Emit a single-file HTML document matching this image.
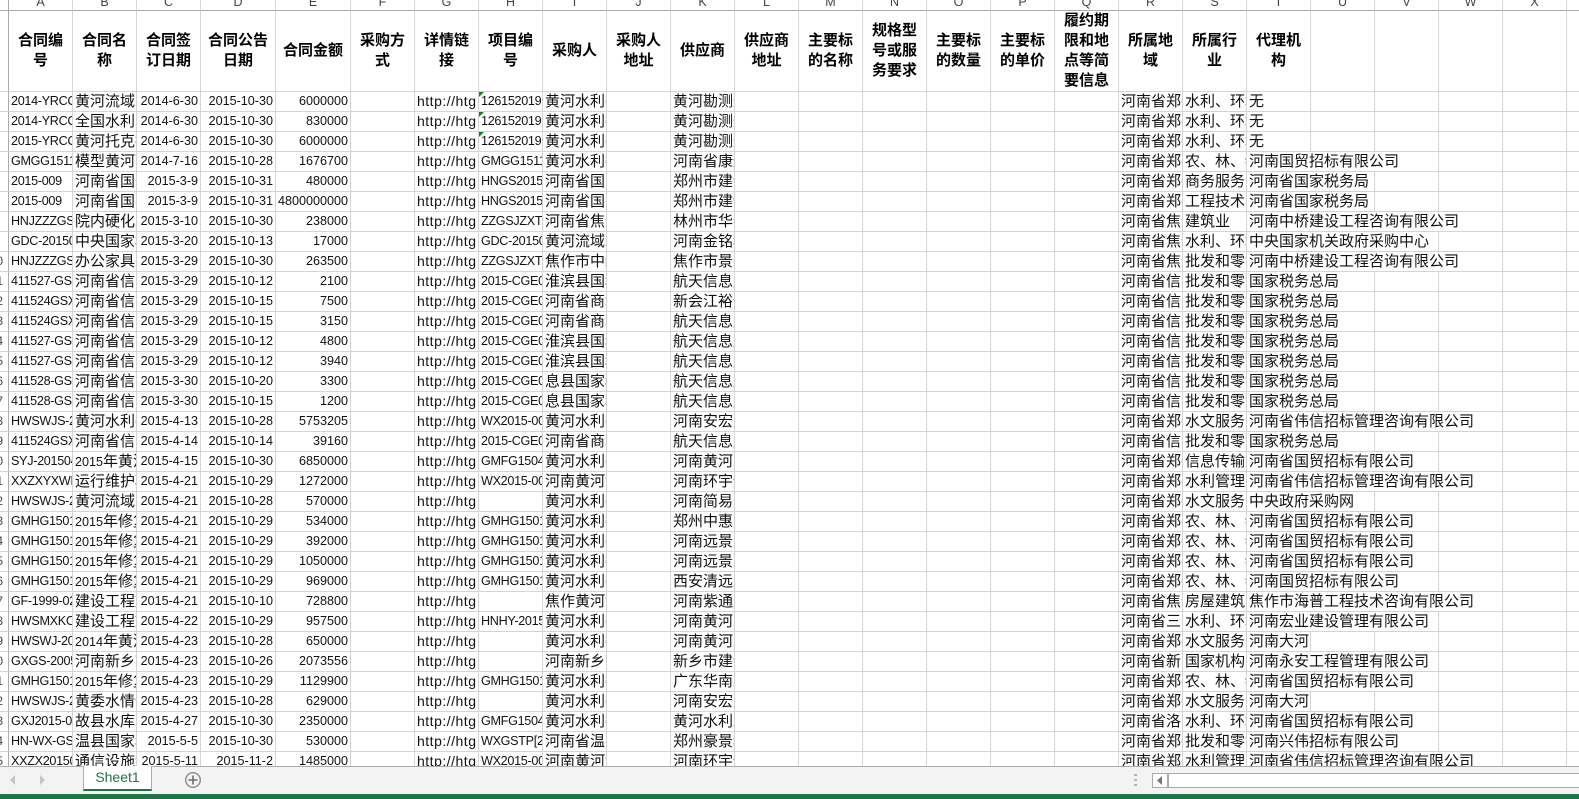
<!DOCTYPE html>
<html lang="zh"><head><meta charset="utf-8"><title>Sheet1</title>
<style>
html,body{margin:0;padding:0;background:#fff;width:1579px;height:799px;overflow:hidden}
#g{position:absolute;left:0;top:0;width:1579px;height:766px;overflow:hidden}
table{table-layout:fixed;border-collapse:separate;border-spacing:0;width:1631px;font:15px/19px "Liberation Sans","Noto Sans CJK SC",sans-serif;color:#111}
td{box-sizing:border-box;height:20px;padding:0 2px;overflow:hidden;white-space:nowrap;border-right:1px solid #d4d4d4;border-bottom:1px solid #d4d4d4}
.l,i{font-size:12.6px;font-style:normal}
i{line-height:10px}
.l:nth-child(2),.l:nth-child(9){letter-spacing:-.3px}
.l:nth-child(8){font-size:14px;letter-spacing:.5px}
.r{text-align:right;font-size:12.6px}
.n{padding:0;border-right:1px solid #ababab;font-size:12px;color:#444;text-align:right;padding-right:5px;direction:ltr}
.n div{width:3px;overflow:hidden;direction:rtl}
.c td{height:11px;padding:0;border-bottom:1px solid #ababab;text-align:center;font-size:12.5px;color:#444}
.c div{height:10px;line-height:5px;overflow:hidden}
.c td:first-child{border-right-color:#ababab}
.h td{height:80px;white-space:normal;word-break:break-all;text-align:center;font-weight:bold;line-height:20px;color:#000;padding:0 3px}
.t{position:relative}
.t:before{content:"";position:absolute;left:0;top:0;border-top:5px solid #1a7f1a;border-right:5px solid transparent}
#b{position:absolute;left:0;top:766px;width:1579px;height:28px;background:#f3f3f3;border-top:1px solid #ababab;box-sizing:border-box}
#tab{position:absolute;left:83px;top:-1px;width:69px;height:25px;box-sizing:border-box;background:#fff;border:1px solid #ababab;border-top:0;border-bottom:2px solid #217346;color:#217346;font:14px/23px "Liberation Sans",sans-serif;text-align:center}
#st{position:absolute;left:0;top:794px;width:1579px;height:5px;background:#217346}
#sb{position:absolute;left:1152px;top:6px;width:427px;height:15px;box-sizing:border-box;background:#fff;border:1px solid #ababab;border-right:0}
#sb:before{content:"";position:absolute;left:14px;top:0;width:2px;height:13px;background:#ababab}
svg{position:absolute}
</style></head><body>
<div id="g"><table>
<colgroup><col style="width:9px"><col style="width:64px"><col style="width:64px"><col style="width:64px"><col style="width:75px"><col style="width:75px"><col style="width:64px"><col style="width:64px"><col style="width:64px"><col style="width:64px"><col style="width:64px"><col style="width:64px"><col style="width:64px"><col style="width:64px"><col style="width:64px"><col style="width:64px"><col style="width:64px"><col style="width:64px"><col style="width:64px"><col style="width:64px"><col style="width:64px"><col style="width:64px"><col style="width:64px"><col style="width:64px"><col style="width:64px"><col style="width:64px"></colgroup>
<tr class="c"><td><td><div>A</div><td><div>B</div><td><div>C</div><td><div>D</div><td><div>E</div><td><div>F</div><td><div>G</div><td><div>H</div><td><div>I</div><td><div>J</div><td><div>K</div><td><div>L</div><td><div>M</div><td><div>N</div><td><div>O</div><td><div>P</div><td><div>Q</div><td><div>R</div><td><div>S</div><td><div>T</div><td><div>U</div><td><div>V</div><td><div>W</div><td><div>X</div><td><div>Y</div></tr>
<tr class="h"><td style="border-right-color:#ababab"><td>合同编号<td>合同名称<td>合同签订日期<td>合同公告日期<td>合同金额<td>采购方式<td>详情链接<td>项目编号<td>采购人<td>采购人地址<td>供应商<td>供应商地址<td>主要标的名称<td>规格型号或服务要求<td>主要标的数量<td>主要标的单价<td>履约期限和地点等简要信息<td>所属地域<td>所属行业<td>代理机构<td><td><td><td><td></tr>
<tr><td class="n"><td class="l">2014-YRCC-01<td>黄河流域水<td class="r">2014-6-30<td class="r">2015-10-30<td class="r">6000000<td><td class="l">http://htg<td class="l t">1261520191<td>黄河水利委<td><td>黄河勘测规<td><td><td><td><td><td><td>河南省郑州<td>水利、环境<td>无<td><td><td><td><td></tr>
<tr><td class="n"><td class="l">2014-YRCC-02<td>全国水利.<td class="r">2014-6-30<td class="r">2015-10-30<td class="r">830000<td><td class="l">http://htg<td class="l t">1261520191<td>黄河水利委<td><td>黄河勘测规<td><td><td><td><td><td><td>河南省郑州<td>水利、环境<td>无<td><td><td><td><td></tr>
<tr><td class="n"><td class="l">2015-YRCC-03<td>黄河托克托<td class="r">2014-6-30<td class="r">2015-10-30<td class="r">6000000<td><td class="l">http://htg<td class="l t">1261520191<td>黄河水利委<td><td>黄河勘测规<td><td><td><td><td><td><td>河南省郑州<td>水利、环境<td>无<td><td><td><td><td></tr>
<tr><td class="n"><td class="l">GMGG1511<td>模型黄河下<td class="r">2014-7-16<td class="r">2015-10-28<td class="r">1676700<td><td class="l">http://htg<td class="l">GMGG1511<td>黄河水利委<td><td>河南省康达<td><td><td><td><td><td><td>河南省郑州<td>农、林、牧<td colspan="3">河南国贸招标有限公司<td><td><td></tr>
<tr><td class="n"><td class="l">2015-009<td>河南省国家<td class="r">2015-3-9<td class="r">2015-10-31<td class="r">480000<td><td class="l">http://htg<td class="l">HNGS20150<td>河南省国家<td><td>郑州市建设<td><td><td><td><td><td><td>河南省郑州<td>商务服务业<td colspan="2">河南省国家税务局<td><td><td><td></tr>
<tr><td class="n"><td class="l">2015-009<td>河南省国家<td class="r">2015-3-9<td class="r">2015-10-31<td class="r">4800000000<td><td class="l">http://htg<td class="l">HNGS20150<td>河南省国家<td><td>郑州市建设<td><td><td><td><td><td><td>河南省郑州<td>工程技术与<td colspan="2">河南省国家税务局<td><td><td><td></tr>
<tr><td class="n"><td class="l">HNJZZZGS01<td>院内硬化工<td class="r">2015-3-10<td class="r">2015-10-30<td class="r">238000<td><td class="l">http://htg<td class="l">ZZGSJZXTP1<td>河南省焦作<td><td>林州市华泰<td><td><td><td><td><td><td>河南省焦作<td>建筑业<td colspan="4">河南中桥建设工程咨询有限公司<td><td></tr>
<tr><td class="n"><td class="l">GDC-2015001<td>中央国家机<td class="r">2015-3-20<td class="r">2015-10-13<td class="r">17000<td><td class="l">http://htg<td class="l">GDC-2015001<td>黄河流域水<td><td>河南金铭科<td><td><td><td><td><td><td>河南省焦作<td>水利、环境<td colspan="3">中央国家机关政府采购中心<td><td><td></tr>
<tr><td class="n"><div>10</div><td class="l">HNJZZZGS02<td>办公家具采<td class="r">2015-3-29<td class="r">2015-10-30<td class="r">263500<td><td class="l">http://htg<td class="l">ZZGSJZXTP2<td>焦作市中级<td><td>焦作市景泰<td><td><td><td><td><td><td>河南省焦作<td>批发和零售<td colspan="4">河南中桥建设工程咨询有限公司<td><td></tr>
<tr><td class="n"><div>11</div><td class="l">411527-GSX1<td>河南省信阳<td class="r">2015-3-29<td class="r">2015-10-12<td class="r">2100<td><td class="l">http://htg<td class="l">2015-CGE001<td>淮滨县国税<td><td>航天信息股<td><td><td><td><td><td><td>河南省信阳<td>批发和零售<td colspan="2">国家税务总局<td><td><td><td></tr>
<tr><td class="n"><div>12</div><td class="l">411524GSX1<td>河南省信阳<td class="r">2015-3-29<td class="r">2015-10-15<td class="r">7500<td><td class="l">http://htg<td class="l">2015-CGE002<td>河南省商城<td><td>新会江裕信<td><td><td><td><td><td><td>河南省信阳<td>批发和零售<td colspan="2">国家税务总局<td><td><td><td></tr>
<tr><td class="n"><div>13</div><td class="l">411524GSX2<td>河南省信阳<td class="r">2015-3-29<td class="r">2015-10-15<td class="r">3150<td><td class="l">http://htg<td class="l">2015-CGE003<td>河南省商城<td><td>航天信息股<td><td><td><td><td><td><td>河南省信阳<td>批发和零售<td colspan="2">国家税务总局<td><td><td><td></tr>
<tr><td class="n"><div>14</div><td class="l">411527-GSX2<td>河南省信阳<td class="r">2015-3-29<td class="r">2015-10-12<td class="r">4800<td><td class="l">http://htg<td class="l">2015-CGE004<td>淮滨县国税<td><td>航天信息股<td><td><td><td><td><td><td>河南省信阳<td>批发和零售<td colspan="2">国家税务总局<td><td><td><td></tr>
<tr><td class="n"><div>15</div><td class="l">411527-GSX3<td>河南省信阳<td class="r">2015-3-29<td class="r">2015-10-12<td class="r">3940<td><td class="l">http://htg<td class="l">2015-CGE005<td>淮滨县国税<td><td>航天信息股<td><td><td><td><td><td><td>河南省信阳<td>批发和零售<td colspan="2">国家税务总局<td><td><td><td></tr>
<tr><td class="n"><div>16</div><td class="l">411528-GSX1<td>河南省信阳<td class="r">2015-3-30<td class="r">2015-10-20<td class="r">3300<td><td class="l">http://htg<td class="l">2015-CGE006<td>息县国家税<td><td>航天信息股<td><td><td><td><td><td><td>河南省信阳<td>批发和零售<td colspan="2">国家税务总局<td><td><td><td></tr>
<tr><td class="n"><div>17</div><td class="l">411528-GSX2<td>河南省信阳<td class="r">2015-3-30<td class="r">2015-10-15<td class="r">1200<td><td class="l">http://htg<td class="l">2015-CGE007<td>息县国家税<td><td>航天信息股<td><td><td><td><td><td><td>河南省信阳<td>批发和零售<td colspan="2">国家税务总局<td><td><td><td></tr>
<tr><td class="n"><div>18</div><td class="l">HWSWJS-2015<td>黄河水利委<td class="r">2015-4-13<td class="r">2015-10-28<td class="r">5753205<td><td class="l">http://htg<td class="l">WX2015-001<td>黄河水利委<td><td>河南安宏建<td><td><td><td><td><td><td>河南省郑州<td>水文服务业<td colspan="4">河南省伟信招标管理咨询有限公司<td><td></tr>
<tr><td class="n"><div>19</div><td class="l">411524GSX3<td>河南省信阳<td class="r">2015-4-14<td class="r">2015-10-14<td class="r">39160<td><td class="l">http://htg<td class="l">2015-CGE008<td>河南省商城<td><td>航天信息股<td><td><td><td><td><td><td>河南省信阳<td>批发和零售<td colspan="2">国家税务总局<td><td><td><td></tr>
<tr><td class="n"><div>20</div><td class="l">SYJ-201504-1<td><i>2015</i>年黄河<td class="r">2015-4-15<td class="r">2015-10-30<td class="r">6850000<td><td class="l">http://htg<td class="l">GMFG15040<td>黄河水利委<td><td>河南黄河水<td><td><td><td><td><td><td>河南省郑州<td>信息传输业<td colspan="3">河南省国贸招标有限公司<td><td><td></tr>
<tr><td class="n"><div>21</div><td class="l">XXZXYXWH01<td>运行维护项<td class="r">2015-4-21<td class="r">2015-10-29<td class="r">1272000<td><td class="l">http://htg<td class="l">WX2015-002<td>河南黄河河<td><td>河南环宇通<td><td><td><td><td><td><td>河南省郑州<td>水利管理业<td colspan="4">河南省伟信招标管理咨询有限公司<td><td></tr>
<tr><td class="n"><div>22</div><td class="l">HWSWJS-2015<td>黄河流域水<td class="r">2015-4-21<td class="r">2015-10-28<td class="r">570000<td><td class="l">http://htg<td><td>黄河水利委<td><td>河南简易建<td><td><td><td><td><td><td>河南省郑州<td>水文服务业<td colspan="2">中央政府采购网<td><td><td><td></tr>
<tr><td class="n"><div>23</div><td class="l">GMHG15011<td><i>2015</i>年修复<td class="r">2015-4-21<td class="r">2015-10-29<td class="r">534000<td><td class="l">http://htg<td class="l">GMHG15011<td>黄河水利委<td><td>郑州中惠建<td><td><td><td><td><td><td>河南省郑州<td>农、林、牧<td colspan="3">河南省国贸招标有限公司<td><td><td></tr>
<tr><td class="n"><div>24</div><td class="l">GMHG15012<td><i>2015</i>年修复<td class="r">2015-4-21<td class="r">2015-10-29<td class="r">392000<td><td class="l">http://htg<td class="l">GMHG15012<td>黄河水利委<td><td>河南远景建<td><td><td><td><td><td><td>河南省郑州<td>农、林、牧<td colspan="3">河南省国贸招标有限公司<td><td><td></tr>
<tr><td class="n"><div>25</div><td class="l">GMHG15013<td><i>2015</i>年修复<td class="r">2015-4-21<td class="r">2015-10-29<td class="r">1050000<td><td class="l">http://htg<td class="l">GMHG15013<td>黄河水利委<td><td>河南远景建<td><td><td><td><td><td><td>河南省郑州<td>农、林、牧<td colspan="3">河南省国贸招标有限公司<td><td><td></tr>
<tr><td class="n"><div>26</div><td class="l">GMHG15014<td><i>2015</i>年修复<td class="r">2015-4-21<td class="r">2015-10-29<td class="r">969000<td><td class="l">http://htg<td class="l">GMHG15014<td>黄河水利委<td><td>西安清远建<td><td><td><td><td><td><td>河南省郑州<td>农、林、牧<td colspan="3">河南国贸招标有限公司<td><td><td></tr>
<tr><td class="n"><div>27</div><td class="l">GF-1999-0201<td>建设工程施<td class="r">2015-4-21<td class="r">2015-10-10<td class="r">728800<td><td class="l">http://htg<td><td>焦作黄河河<td><td>河南紫通建<td><td><td><td><td><td><td>河南省焦作<td>房屋建筑业<td colspan="4">焦作市海普工程技术咨询有限公司<td><td></tr>
<tr><td class="n"><div>28</div><td class="l">HWSMXKC01<td>建设工程施<td class="r">2015-4-22<td class="r">2015-10-29<td class="r">957500<td><td class="l">http://htg<td class="l">HNHY-2015<td>黄河水利委<td><td>河南黄河水<td><td><td><td><td><td><td>河南省三门<td>水利、环境<td colspan="3">河南宏业建设管理有限公司<td><td><td></tr>
<tr><td class="n"><div>29</div><td class="l">HWSWJ-2015<td><i>2014</i>年黄河<td class="r">2015-4-23<td class="r">2015-10-28<td class="r">650000<td><td class="l">http://htg<td><td>黄河水利委<td><td>河南黄河水<td><td><td><td><td><td><td>河南省郑州<td>水文服务业<td>河南大河<td><td><td><td><td></tr>
<tr><td class="n"><div>30</div><td class="l">GXGS-2005-1<td>河南新乡市<td class="r">2015-4-23<td class="r">2015-10-26<td class="r">2073556<td><td class="l">http://htg<td><td>河南新乡市<td><td>新乡市建设<td><td><td><td><td><td><td>河南省新乡<td>国家机构<td colspan="3">河南永安工程管理有限公司<td><td><td></tr>
<tr><td class="n"><div>31</div><td class="l">GMHG15015<td><i>2015</i>年修复<td class="r">2015-4-23<td class="r">2015-10-29<td class="r">1129900<td><td class="l">http://htg<td class="l">GMHG15015<td>黄河水利委<td><td>广东华南水<td><td><td><td><td><td><td>河南省郑州<td>农、林、牧<td colspan="3">河南省国贸招标有限公司<td><td><td></tr>
<tr><td class="n"><div>32</div><td class="l">HWSWJS-2015<td>黄委水情信<td class="r">2015-4-23<td class="r">2015-10-28<td class="r">629000<td><td class="l">http://htg<td><td>黄河水利委<td><td>河南安宏建<td><td><td><td><td><td><td>河南省郑州<td>水文服务业<td>河南大河<td><td><td><td><td></tr>
<tr><td class="n"><div>33</div><td class="l">GXJ2015-001<td>故县水库工<td class="r">2015-4-27<td class="r">2015-10-30<td class="r">2350000<td><td class="l">http://htg<td class="l">GMFG15041<td>黄河水利委<td><td>黄河水利水<td><td><td><td><td><td><td>河南省洛阳<td>水利、环境<td colspan="3">河南省国贸招标有限公司<td><td><td></tr>
<tr><td class="n"><div>34</div><td class="l">HN-WX-GS-01<td>温县国家税<td class="r">2015-5-5<td class="r">2015-10-30<td class="r">530000<td><td class="l">http://htg<td class="l">WXGSTP[201<td>河南省温县<td><td>郑州豪景科<td><td><td><td><td><td><td>河南省郑州<td>批发和零售<td colspan="3">河南兴伟招标有限公司<td><td><td></tr>
<tr><td class="n"><div>35</div><td class="l">XXZX2015001<td>通信设施维<td class="r">2015-5-11<td class="r">2015-11-2<td class="r">1485000<td><td class="l">http://htg<td class="l">WX2015-003<td>河南黄河河<td><td>河南环宇通<td><td><td><td><td><td><td>河南省郑州<td>水利管理业<td colspan="4">河南省伟信招标管理咨询有限公司<td><td></tr>
</table></div>
<div id="b">
<svg style="left:9px;top:7px" width="8" height="12" viewBox="0 0 8 12"><path d="M6 1L1 6l5 5z" fill="#c6c6c6"/></svg>
<svg style="left:38px;top:7px" width="8" height="12" viewBox="0 0 8 12"><path d="M2 1l5 5-5 5z" fill="#c6c6c6"/></svg>
<div id="tab">Sheet1</div>
<svg style="left:184px;top:4px" width="18" height="18" viewBox="0 0 18 18"><circle cx="9" cy="9" r="7.3" fill="none" stroke="#8a8a8a" stroke-width="1.4"/><path d="M9 4.5v9M4.5 9h9" stroke="#6e6e6e" stroke-width="1.6"/></svg>
<svg style="left:1134px;top:7px" width="4" height="14" viewBox="0 0 4 14"><path d="M0 0h3v2H0zM0 5h3v2H0zM0 10h3v2H0z" fill="#b5b5b5"/></svg>
<div id="sb"><svg style="left:3px;top:1px" width="8" height="11" viewBox="0 0 8 11"><path d="M6 1L1 5.5 6 10z" fill="#777"/></svg></div>
</div>
<div id="st"></div>
</body></html>
